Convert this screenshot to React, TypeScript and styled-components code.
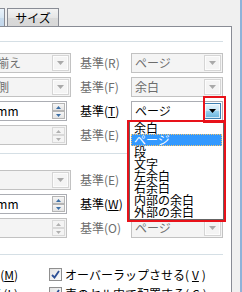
import React from 'react';
import styled, { createGlobalStyle } from 'styled-components';

const Global = createGlobalStyle`
  html, body { margin: 0; padding: 0; background: #f0f0f0; }
  body { font-family: "Noto Sans CJK JP", "Liberation Sans", sans-serif; }
  * { box-sizing: border-box; }
`;

const Screen = styled.div`
  position: relative;
  width: 242px;
  height: 292px;
  overflow: hidden;
  background: #f0f0f0;
  font-size: 12px;
  line-height: 14px;
  color: #000;
`;

const TabStrip = styled.div`
  display: flex;
  align-items: flex-end;
  height: 26px;
  gap: 2px;
`;

const Tab = styled.div<{ $w: number }>`
  width: ${p => p.$w}px;
  height: 18px;
  border: 1px solid #898c95;
  border-bottom: none;
  background: linear-gradient(#f3f3f3, #e6e6e6 50%, #dadada 51%, #d8d8d8);
  display: flex;
  align-items: center;
  justify-content: center;
  padding-top: 1px;
`;

const PartialTab = styled(Tab)`
  border-left: none;
  background: linear-gradient(#eaf3fb, #d9e8f5 50%, #c9dcee 51%, #c4d8ec);
`;

const Body = styled.div`
  display: flex;
  height: 266px;
`;

const Panel = styled.div`
  width: 232px;
  background: #fff;
  border-top: 1px solid #898c95;
  border-right: 1px solid #898c95;
  display: flex;
  flex-direction: column;
`;

const Gutter = styled.div`
  flex: 1;
  margin-top: -26px;
  border-right: 2px solid #8fb2d9;
  background: #f0f0f0;
`;

const Rule = styled.div<{ $top: number }>`
  width: 223px;
  height: 1px;
  margin-top: ${p => p.$top}px;
  background: #d5dfe5;
  flex: none;
`;

const Group = styled.div<{ $top: number }>`
  display: grid;
  grid-template-columns: 90px 60px 92px;
  grid-auto-rows: 20px;
  row-gap: 4px;
  margin-left: -19px;
  margin-top: ${p => p.$top}px;
`;

const Label = styled.div<{ $off?: boolean }>`
  padding-left: 9px;
  display: flex;
  align-items: center;
  white-space: nowrap;
  color: ${p => (p.$off ? '#6d6d6d' : '#000')};
`;

const Field = styled.div<{ $off?: boolean; $narrow?: boolean }>`
  display: flex;
  align-items: stretch;
  height: 20px;
  width: ${p => (p.$narrow ? '86px' : '100%')};
  border: 1px solid ${p => (p.$off ? '#c2c2c2' : '#abadb3')};
  background: ${p => (p.$off ? '#f4f4f4' : '#fff')};
  color: ${p => (p.$off ? '#6d6d6d' : '#000')};
`;

const FieldText = styled.div<{ $pad?: number }>`
  flex: 1;
  padding-left: ${p => p.$pad ?? 3}px;
  display: flex;
  align-items: center;
  white-space: nowrap;
  overflow: hidden;
`;

const DropButton = styled.div<{ $off?: boolean; $hot?: boolean }>`
  width: 17px;
  margin: 1px;
  display: flex;
  align-items: center;
  justify-content: center;
  border: 1px solid ${p => (p.$hot ? '#3c7fb1' : p.$off ? '#d5d5d5' : '#acacac')};
  background: ${p =>
    p.$hot
      ? 'linear-gradient(#e5f4fc, #c4e5f6 50%, #98d1ef 51%, #68b3db)'
      : p.$off
      ? '#f4f4f4'
      : 'linear-gradient(#f2f2f2, #ebebeb 50%, #dddddd 51%, #cfcfcf)'};
  box-shadow: inset 0 0 0 1px rgba(255, 255, 255, 0.7);
`;

const SpinCol = styled.div`
  width: 13px;
  margin: 1px;
  display: flex;
  flex-direction: column;
`;

const SpinHalf = styled.div<{ $off?: boolean }>`
  flex: 1;
  display: flex;
  align-items: center;
  justify-content: center;
  border: 1px solid ${p => (p.$off ? '#d9d9d9' : '#b5b5b5')};
  background: ${p => (p.$off ? '#f4f4f4' : 'linear-gradient(#f6f6f6, #e4e4e4)')};
`;

const Checks = styled.div`
  display: grid;
  grid-template-columns: 49px 1fr;
  grid-auto-rows: 19px;
  margin-top: 10px;
`;

const ClipLeft = styled.div`
  display: flex;
  justify-content: flex-end;
  align-items: center;
  overflow: hidden;
  white-space: nowrap;
  padding-right: 31px;
`;

const CheckItem = styled.label`
  display: flex;
  align-items: center;
  gap: 3px;
  white-space: nowrap;
`;

const Box = styled.span`
  width: 13px;
  height: 13px;
  flex: none;
  border: 1px solid #8f8f8f;
  background: linear-gradient(135deg, #e3e3e3, #fcfcfc);
  display: flex;
  align-items: center;
  justify-content: center;
`;

const List = styled.div`
  position: absolute;
  left: 129px;
  top: 121px;
  width: 95px;
  height: 99px;
  border: 1px solid #646464;
  background: #fff;
  padding: 0 1px;
  display: flex;
  flex-direction: column;
`;

const Item = styled.div<{ $sel?: boolean }>`
  height: 12px;
  line-height: 12px;
  padding-left: 3px;
  white-space: nowrap;
  font-size: 12px;
  background: ${p => (p.$sel ? '#3399ff' : 'transparent')};
  color: ${p => (p.$sel ? '#fff' : '#000')};
  outline: ${p => (p.$sel ? '1px dotted #f2c46d' : 'none')};
  outline-offset: -1px;
`;

const Highlight = styled.div<{ $x: number; $y: number; $w: number; $h: number }>`
  position: absolute;
  left: ${p => p.$x}px;
  top: ${p => p.$y}px;
  width: ${p => p.$w}px;
  height: ${p => p.$h}px;
  border: 2px solid #e8121a;
  pointer-events: none;
`;

const Down = ({ c }: { c: string }) => (
  <svg width="7" height="4" viewBox="0 0 7 4"><path d="M0 0h7L3.5 4z" fill={c} /></svg>
);
const Up = ({ c }: { c: string }) => (
  <svg width="5" height="3" viewBox="0 0 5 3"><path d="M0 3h5L2.5 0z" fill={c} /></svg>
);
const SmallDown = ({ c }: { c: string }) => (
  <svg width="5" height="3" viewBox="0 0 5 3"><path d="M0 0h5L2.5 3z" fill={c} /></svg>
);

const Combo = ({ text, off, hot }: { text?: string; off?: boolean; hot?: boolean }) => (
  <Field $off={off}>
    <FieldText>{text}</FieldText>
    <DropButton $off={off} $hot={hot}>
      <Down c={hot ? '#000' : off ? '#a9a9a9' : '#4d4d4d'} />
    </DropButton>
  </Field>
);

const Spin = ({ text, off }: { text?: string; off?: boolean }) => (
  <Field $off={off} $narrow>
    <FieldText $pad={5}>{text}</FieldText>
    <SpinCol>
      <SpinHalf $off={off}><Up c={off ? '#b0b0b0' : '#3b6ea5'} /></SpinHalf>
      <SpinHalf $off={off}><SmallDown c={off ? '#b0b0b0' : '#3b6ea5'} /></SpinHalf>
    </SpinCol>
  </Field>
);

const Key = ({ k }: { k: string }) => (
  <>(<u>{k}</u>)</>
);

const Check = () => (
  <Box>
    <svg width="9" height="9" viewBox="0 0 9 9"><path d="M1 5l2.5 2.5L8 1" stroke="#2c4f95" strokeWidth="1.8" fill="none" /></svg>
  </Box>
);

export default function App() {
  return (
    <Screen>
      <Global />
      <TabStrip>
        <PartialTab $w={5} />
        <Tab $w={52}>サイズ</Tab>
      </TabStrip>
      <Body>
        <Panel>
          <Rule $top={14} />
          <Group $top={11}>
            <Combo text="左揃え" off />
            <Label $off>基準(R)</Label>
            <Combo text="ページ" off />

            <Combo text="内側" off />
            <Label $off>基準(F)</Label>
            <Combo text="余白" off />

            <Spin text="0 mm" />
            <Label>基準<Key k="T" /></Label>
            <Combo text="ページ" hot />

            <Spin off />
            <Label $off>基準(E)</Label>
            <Combo off />
          </Group>
          <Rule $top={8} />
          <Group $top={16}>
            <Combo off />
            <Label $off>基準(E)</Label>
            <Combo off />

            <Spin text="0 mm" />
            <Label>基準<Key k="W" /></Label>
            <Combo />

            <Spin off />
            <Label $off>基準(O)</Label>
            <Combo text="ページ" off />
          </Group>
          <Rule $top={16} />
          <Checks>
            <ClipLeft>文字列と一緒に移動する<Key k="M" /></ClipLeft>
            <CheckItem>
              <Check />
              オーバーラップさせる<Key k="V" />
            </CheckItem>
            <ClipLeft>アンカーを段落に固定する<Key k="L" /></ClipLeft>
            <CheckItem>
              <Check />
              表のセル内で配置する<Key k="C" />
            </CheckItem>
          </Checks>
        </Panel>
        <Gutter />
      </Body>
      <List>
        <Item>余白</Item>
        <Item $sel>ページ</Item>
        <Item>段</Item>
        <Item>文字</Item>
        <Item>左余白</Item>
        <Item>右余白</Item>
        <Item>内部の余白</Item>
        <Item>外部の余白</Item>
      </List>
      <Highlight $x={203} $y={96} $w={23} $h={27} />
      <Highlight $x={127} $y={120} $w={99} $h={102} />
    </Screen>
  );
}
